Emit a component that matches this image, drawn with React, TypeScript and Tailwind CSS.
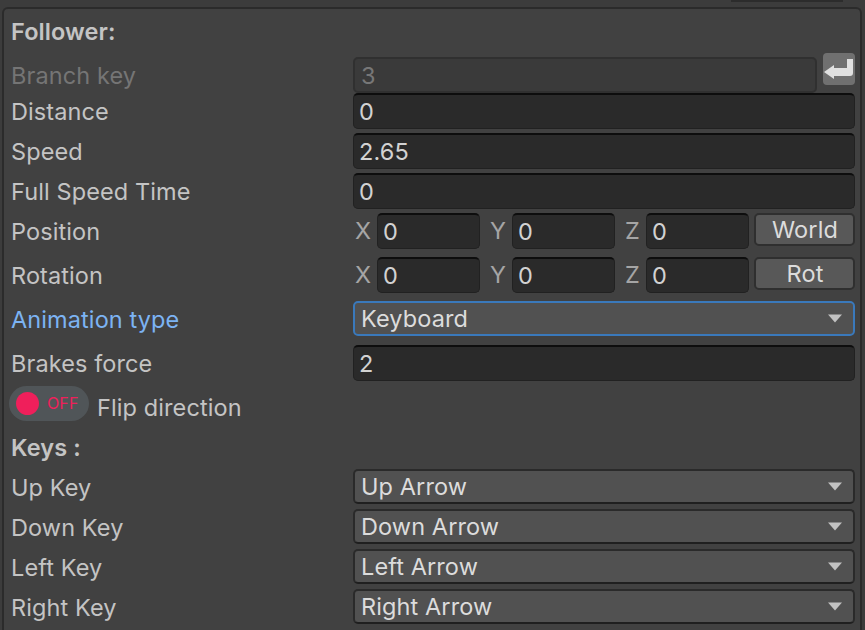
const font = { fontFamily: 'Inter, "Liberation Sans", sans-serif' };

function Field({ value, className = '' }: { value: string; className?: string }) {
  return (
    <div className={`h-[36px] flex items-center pl-[5px] pt-[1px] rounded-[5px] bg-[#2a2a2a] border border-[#212121] border-t-2 border-t-[#0d0d0d] text-[#d2d2d2] ${className}`}>
      {value}
    </div>
  );
}

function Caret() {
  return (
    <svg width="14" height="9" viewBox="0 0 14 9" className="shrink-0">
      <path d="M0 0.5H14L7 8.5Z" fill="#c2c2c2" />
    </svg>
  );
}

function Dropdown({ value, focused }: { value: string; focused?: boolean }) {
  return (
    <div
      className={`w-[502px] h-[35px] flex items-center justify-between pl-[6px] pr-[11px] rounded-[5px] bg-[#515151] border-2 text-[#dcdcdc] ${
        focused ? 'border-[#3a79bb]' : 'border-[#2a2a2a] border-b-[#1f1f1f]'
      }`}
    >
      <span>{value}</span>
      <Caret />
    </div>
  );
}

function Row({ label, children, className = '', labelColor = 'text-[#c4c4c4]', labelPad = 'pt-[1px]' }: { label: string; children: React.ReactNode; className?: string; labelColor?: string; labelPad?: string }) {
  return (
    <div className={`flex items-center ${className}`}>
      <div className={`w-[342px] ${labelPad} ${labelColor}`}>{label}</div>
      {children}
    </div>
  );
}

function Vector({ label, button }: { label: string; button: string }) {
  return (
    <Row label={label} className="mt-[4px]">
      <div className="flex items-start">
        <div className="flex items-center text-[#a5a5a5]">
          <span className="w-[24px] pl-[2px]">X</span>
          <Field value="0" className="w-[103px]" />
          <span className="w-[32px] pl-[10px]">Y</span>
          <Field value="0" className="w-[103px]" />
          <span className="w-[31px] pl-[10px]">Z</span>
          <Field value="0" className="w-[103px]" />
        </div>
        <div className="ml-[5px] w-[101px] h-[33px] flex items-center justify-center pl-[1px] rounded-[5px] bg-[#585858] border-2 border-[#2f2f2f] text-[#dcdcdc]">
          {button}
        </div>
      </div>
    </Row>
  );
}

export default function App() {
  return (
    <div style={font} className="w-[865px] h-[630px] overflow-hidden bg-[#3c3c3c] text-[23.5px] tracking-[0.1px] leading-none relative">
      <div className="absolute left-[731px] top-0 w-[112px] h-[2px] bg-[#2c2c2c]" />
      <div className="mt-[7px] ml-[2px] w-[860px] h-[630px] rounded-[6px] border-2 border-b-0 border-[#2b2b2b] bg-[#414141] pl-[7px] pt-[5px] box-border">
        <div className="h-[36px] flex items-center font-semibold text-[#c4c4c4]">Follower:</div>

        <div className="mt-[7px] flex items-start">
          <div className="w-[342px] h-[36px] flex items-center pt-[1px] text-[#757575]">Branch key</div>
          <div className="w-[464px] h-[36px] flex items-center pl-[6px] pt-[1px] rounded-[5px] bg-[#3a3a3a] border-2 border-[#303030] text-[#777777]">3</div>
          <div className="ml-[6px] -mt-[4px] w-[32px] h-[32px] rounded-[4px] bg-[#707070]">
            <svg width="32" height="32" viewBox="0 0 32 32">
              <path d="M1 19L11 12V15H24V6H30V20Q30 23 27 23H11V26Z" fill="#e0e0e0" />
            </svg>
          </div>
        </div>

        <Row label="Distance">
          <Field value="0" className="w-[502px]" />
        </Row>
        <Row label="Speed" className="mt-[4px]">
          <Field value="2.65" className="w-[502px]" />
        </Row>
        <Row label="Full Speed Time" className="mt-[4px]">
          <Field value="0" className="w-[502px]" />
        </Row>

        <Vector label="Position" button="World" />
        <div className="mt-[8px]">
          <Vector label="Rotation" button="Rot" />
        </div>

        <Row label="Animation type" className="mt-[8px]" labelColor="text-[#7cb3f3]" labelPad="pt-[3px]">
          <Dropdown value="Keyboard" focused />
        </Row>
        <Row label="Brakes force" className="mt-[9px]">
          <Field value="2" className="w-[502px]" />
        </Row>

        <div className="mt-[5px] h-[35px] flex items-center -ml-[2px]">
          <div className="w-[80px] h-[35px] rounded-full bg-[#505558] flex items-center pl-[7px] gap-[8px]">
            <span className="w-[23px] h-[23px] rounded-full bg-[#ef1f5b]" />
            <span className="text-[16px] text-[#ef1f5b] -mt-[1px]">OFF</span>
          </div>
          <span className="ml-[8px] mt-[9px] text-[#c4c4c4]">Flip direction</span>
        </div>

        <div className="mt-[9px] h-[36px] flex items-center font-semibold text-[#c4c4c4]">Keys :</div>

        <Row label="Up Key" className="mt-[3px]" labelPad="pt-[3px]">
          <Dropdown value="Up Arrow" />
        </Row>
        <Row label="Down Key" className="mt-[5px]" labelPad="pt-[3px]">
          <Dropdown value="Down Arrow" />
        </Row>
        <Row label="Left Key" className="mt-[5px]" labelPad="pt-[3px]">
          <Dropdown value="Left Arrow" />
        </Row>
        <Row label="Right Key" className="mt-[5px]" labelPad="pt-[3px]">
          <Dropdown value="Right Arrow" />
        </Row>
      </div>
    </div>
  );
}
